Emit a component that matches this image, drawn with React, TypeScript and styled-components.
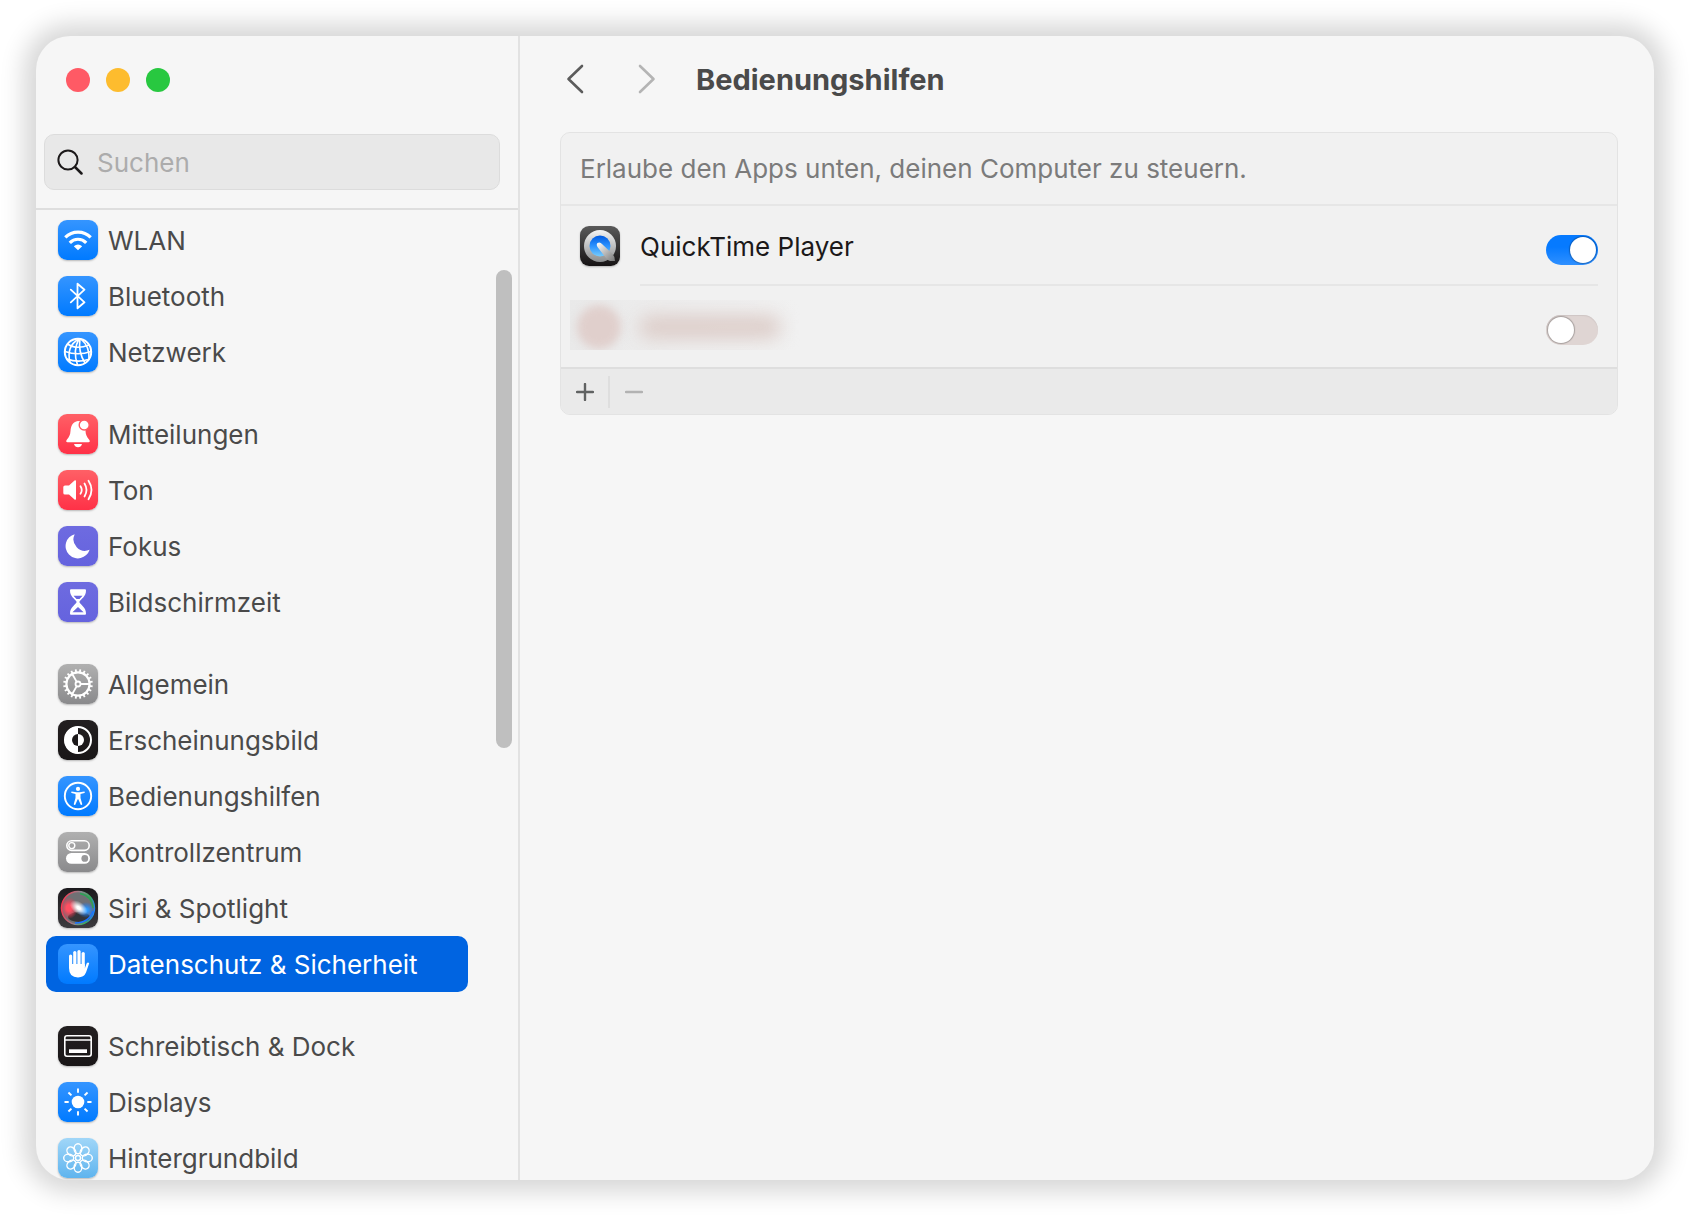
import React, { useState } from 'react';
import styled, { createGlobalStyle, css } from 'styled-components';

const GlobalStyle = createGlobalStyle`
  *, *::before, *::after { box-sizing: border-box; }
  body {
    margin: 0;
    background: #ffffff;
    font-family: Inter, "Liberation Sans", sans-serif;
    font-size: 26px;
    line-height: 32px;
    color: #4a4a4a;
  }
  button, input { font: inherit; color: inherit; }
`;

const Desktop = styled.div`
  height: 100vh;
  min-height: 480px;
  padding: 36px;
`;

const Window = styled.div`
  display: flex;
  height: 100%;
  overflow: hidden;
  border-radius: 34px;
  background: #f6f6f6;
  box-shadow: 0 0 24px 12px rgba(0, 0, 0, 0.16);
`;

const Sidebar = styled.aside`
  position: relative;
  display: flex;
  flex-direction: column;
  flex: 0 0 484px;
  min-width: 0;
  border-right: 2px solid #e2e2e2;
`;

const TrafficLights = styled.div`
  display: flex;
  gap: 16px;
  padding: 32px 30px 0;
`;

const Light = styled.button<{ $color: string }>`
  width: 24px;
  height: 24px;
  padding: 0;
  border: 0;
  border-radius: 50%;
  background: ${(p) => p.$color};
`;

const SearchField = styled.label`
  display: flex;
  align-items: center;
  gap: 14px;
  height: 56px;
  margin: 42px 18px 18px 8px;
  padding: 0 12px;
  border: 1px solid #dcdcdc;
  border-radius: 10px;
  background: #e8e8e8;
`;

const SearchInput = styled.input`
  flex: 1;
  width: 100%;
  min-width: 0;
  padding: 2px 0 0;
  border: 0;
  outline: 0;
  background: transparent;
  &::placeholder { color: #acacac; opacity: 1; }
`;

const NavList = styled.nav`
  display: flex;
  flex-direction: column;
  flex: 1;
  gap: 26px;
  min-height: 0;
  padding: 2px 50px 0 10px;
  border-top: 2px solid #dedede;
  overflow-y: auto;
  scrollbar-width: none;
`;

const NavGroup = styled.ul`
  flex: none;
  margin: 0;
  padding: 0;
  list-style: none;
`;

const NavLink = styled.a<{ $active?: boolean }>`
  display: flex;
  align-items: center;
  gap: 10px;
  height: 56px;
  padding: 0 12px;
  border-radius: 10px;
  color: inherit;
  text-decoration: none;
  white-space: nowrap;
  ${(p) => p.$active && css`
    background: #0064e1;
    color: #ffffff;
  `}
`;

const NavLabel = styled.span`
  padding-top: 2px;
`;

const ScrollThumb = styled.div`
  position: absolute;
  top: 234px;
  right: 6px;
  width: 16px;
  height: 478px;
  border-radius: 8px;
  background: #bfbfbf;
`;

const Tile = styled.svg<{ $from: string; $to: string; $flat?: boolean }>`
  flex: none;
  display: block;
  width: 40px;
  height: 40px;
  border-radius: 9px;
  background: linear-gradient(${(p) => p.$from}, ${(p) => p.$to});
  box-shadow: ${(p) => (p.$flat ? 'none' : '0 1px 2px rgba(0, 0, 0, 0.25)')};
`;

const Main = styled.main`
  flex: 1;
  min-width: 0;
  padding: 0 36px 0 40px;
`;

const Header = styled.header`
  display: flex;
  align-items: center;
  gap: 34px;
  height: 86px;
  margin-bottom: 10px;
`;

const HistoryButtons = styled.div`
  display: flex;
  gap: 42px;
`;

const NavButton = styled.button<{ $muted?: boolean }>`
  display: flex;
  justify-content: center;
  width: 30px;
  padding: 0;
  border: 0;
  background: none;
  color: ${(p) => (p.$muted ? '#b4b4b4' : '#5c5c5c')};
`;

const Title = styled.h1`
  margin: 0;
  padding-top: 2px;
  font-size: 29px;
  line-height: 32px;
  font-weight: 700;
`;

const Panel = styled.section`
  overflow: hidden;
  border: 1px solid #e3e3e3;
  border-radius: 10px;
  background: #f1f1f1;
`;

const Description = styled.p`
  margin: 0;
  padding: 20px 19px 19px;
  border-bottom: 2px solid #e6e6e6;
  color: #7b7b7b;
`;

const AppList = styled.ul`
  margin: 0;
  padding: 0;
  list-style: none;
`;

const AppRow = styled.li`
  display: flex;
  gap: 20px;
  padding-left: 19px;
`;

const AppIconCell = styled.div`
  padding-top: 20px;
`;

const AppBody = styled.div`
  display: flex;
  justify-content: space-between;
  flex: 1;
  height: 80px;
  margin-right: 19px;
  padding-top: 25px;
  border-bottom: 2px solid #e6e6e6;
  color: #1c191a;
`;

const HiddenRow = styled.li`
  display: flex;
  justify-content: space-between;
  height: 81px;
  padding: 14px 19px 0 9px;
`;

const Redaction = styled.div`
  display: flex;
  align-items: center;
  gap: 18px;
  width: 230px;
  height: 50px;
  padding: 4px 0 0 7px;
  overflow: hidden;
  background: linear-gradient(90deg, #e9e9e9, #ededed 40%, #f1f1f1);
`;

const RedactedIcon = styled.div`
  width: 44px;
  height: 44px;
  border-radius: 22px;
  background: #e0cfcc;
  filter: blur(4px);
`;

const RedactedName = styled.div`
  width: 142px;
  height: 24px;
  border-radius: 12px;
  background: #ddceca;
  filter: blur(9px);
`;

const Switch = styled.input`
  appearance: none;
  flex: none;
  width: 52px;
  height: 30px;
  margin: 4px 0 0;
  padding: 2px;
  border-radius: 15px;
  background: #dfd5d3;
  box-shadow: inset 0 1px 1px #cfc6c5;
  &::after {
    content: "";
    display: block;
    width: 26px;
    height: 26px;
    border-radius: 50%;
    background: #ffffff;
    box-shadow: 0 0 1px 1px rgba(0, 0, 0, 0.25);
  }
  &:checked {
    background: linear-gradient(#067aff 40%, #2f90ff);
    box-shadow: none;
  }
  &:checked::after { margin-left: 22px; }
`;

const HiddenSwitchCell = styled.div`
  display: flex;
  padding-top: 11px;
`;

const Toolbar = styled.footer`
  display: flex;
  align-items: center;
  height: 47px;
  border-top: 2px solid #dedede;
  background: #eaeaea;
`;

const ToolButton = styled.button<{ $muted?: boolean }>`
  display: flex;
  justify-content: center;
  width: 47px;
  padding: 0;
  border: 0;
  background: none;
  color: ${(p) => (p.$muted ? '#b2b2b2' : '#606262')};
  & + & { width: 50px; border-left: 2px solid #dedede; padding: 7px 0; }
`;

const Glyph = styled.svg`
  flex: none;
  display: block;
  fill: none;
  stroke: currentColor;
  stroke-linecap: round;
  stroke-linejoin: round;
`;

const spin = (count: number, draw: (angle: number) => React.ReactNode) =>
  Array.from({ length: count }, (_, i) => draw((360 / count) * i));

const BLUE: [string, string] = ['#3595ff', '#007aff'];
const RED: [string, string] = ['#ff6066', '#ff3147'];
const PURPLE: [string, string] = ['#6e6be0', '#6563de'];
const GREY: [string, string] = ['#b0b0b0', '#8a8a8c'];
const BLACK: [string, string] = ['#231f20', '#191617'];

type Item = { label: string; colors: [string, string]; art: React.ReactNode; active?: boolean };

const groups: Item[][] = [
  [
    {
      label: 'WLAN', colors: BLUE,
      art: (
        <g fill="none" stroke="#fff" strokeWidth="3.2">
          <path d="M7.3 17.4A18 18 0 0 1 32.7 17.4" />
          <path d="M11.8 22.8A11.3 11.3 0 0 1 28.2 22.8" />
          <path d="M20 30.2L15.8 26.2Q20 22.6 24.2 26.2Z" fill="#fff" stroke="none" />
        </g>
      ),
    },
    {
      label: 'Bluetooth', colors: BLUE,
      art: <path d="M12.8 13.6L26.5 26.3L19.5 32.3V7.7L26.5 13.7L12.8 26.4" fill="none" stroke="#fff" strokeWidth="1.8" strokeLinejoin="round" strokeLinecap="round" />,
    },
    {
      label: 'Netzwerk', colors: BLUE,
      art: (
        <g fill="none" stroke="#fff" strokeWidth="1.6">
          <circle cx="20" cy="20" r="13.2" strokeWidth="2" />
          <path d="M21 7Q8 14 12 30.500M21 7Q14.500 18 19.500 33M22 7Q20 20 27 31M23 7Q32 15 31 27" />
          <path d="M9.500 12Q18 18 31 13M7 19.500Q20 24 33 19.500M9 27Q20 31 30 27.500" />
        </g>
      ),
    },
  ],
  [
    {
      label: 'Mitteilungen', colors: RED,
      art: (
        <g fill="#fff">
          <path d="M20 7C14.500 8 12.800 12 12.500 17C12.300 21 11 23 9 25.500C7.800 27 8 28.300 9.500 28.300H30.500C32 28.300 32.200 27 31 25.500C29 23 27.700 21 27.500 17V8Z" />
          <path d="M16 30H24Q23 33.300 20 33.300T16 30Z" />
          <circle cx="26.200" cy="11" r="5" stroke="#ff5a63" strokeWidth="1.4" />
        </g>
      ),
    },
    {
      label: 'Ton', colors: RED,
      art: (
        <g fill="none" stroke="#fff" strokeWidth="1.8" strokeLinecap="round">
          <path d="M7 15.500H11L16.500 10.600Q18 9.600 18 11.300V28.700Q18 30.400 16.500 29.400L11 24.500H7Q5.300 24.500 5.300 23V17Q5.300 15.500 7 15.500Z" fill="#fff" stroke="none" />
          <path d="M22.500 16.200Q25 20 22.500 23.800M26.500 13.500Q30.500 20 26.500 26.500M30.500 10.800Q36.500 20 30.500 29.200" />
        </g>
      ),
    },
    { label: 'Fokus', colors: PURPLE, art: <path d="M16.700 8.200A12.300 12.300 0 1 0 31.600 23.800A11.500 11.500 0 0 1 16.700 8.200Z" fill="#fff" /> },
    {
      label: 'Bildschirmzeit', colors: PURPLE,
      art: (
        <g>
          <path d="M13 7.300H27Q28 7.300 28 8.500C28 15 23 16.500 21.300 20C23 23.500 28 25 28 31.500Q28 32.700 27 32.700H13Q12 32.700 12 31.500C12 25 17 23.500 18.700 20C17 16.500 12 15 12 8.500Q12 7.300 13 7.300Z" fill="#fff" />
          <path d="M15.500 13.800H24.500L21.500 17H18.500ZM20 25L25.600 30.300H14.400Z" fill="#6966df" />
        </g>
      ),
    },
  ],
  [
    {
      label: 'Allgemein', colors: GREY,
      art: (
        <g fill="none" stroke="#fff" strokeWidth="1.8">
          <circle cx="20" cy="20" r="11.600" strokeWidth="2.200" />
          <circle cx="20" cy="20" r="2.500" />
          {spin(20, (a) => <path key={a} d="M20 8.500V5.200" transform={`rotate(${a + 9} 20 20)`} />)}
          {spin(3, (a) => <path key={`s${a}`} d="M22.500 20H31" transform={`rotate(${a} 20 20)`} />)}
        </g>
      ),
    },
    {
      label: 'Erscheinungsbild', colors: BLACK,
      art: (
        <g>
          <circle cx="20" cy="20" r="13" fill="none" stroke="#fff" strokeWidth="2" />
          <path d="M20 6.500A13.500 13.500 0 0 0 20 33.500Z" fill="#fff" />
          <path d="M20 14A6 6 0 0 0 20 26Z" fill="#1c191a" />
          <path d="M20 14A6 6 0 0 1 20 26Z" fill="#fff" />
        </g>
      ),
    },
    {
      label: 'Bedienungshilfen', colors: BLUE,
      art: (
        <g fill="#fff">
          <circle cx="20" cy="20" r="13.200" fill="none" stroke="#fff" strokeWidth="1.900" />
          <circle cx="20" cy="12.900" r="2.100" />
          <path d="M13.600 15.600L18.500 16.300H21.500L26.400 15.600Q27.400 16.600 26.400 17L22.500 18V22L24.300 28.300Q23.500 29.600 22.700 28.700L20.300 23.300H19.700L17.300 28.700Q16.500 29.600 15.700 28.300L17.500 22V18L13.600 17Q12.600 16.600 13.600 15.600Z" />
        </g>
      ),
    },
    {
      label: 'Kontrollzentrum', colors: GREY,
      art: (
        <g>
          <rect x="8.800" y="8.800" width="22.400" height="9.600" rx="4.800" fill="none" stroke="#fff" strokeWidth="1.600" />
          <circle cx="13.800" cy="13.600" r="3" fill="none" stroke="#fff" strokeWidth="1.400" />
          <rect x="8" y="21" width="24" height="10.800" rx="5.400" fill="#fff" />
          <circle cx="26.800" cy="26.400" r="3.400" fill="#98989a" />
        </g>
      ),
    },
    {
      label: 'Siri & Spotlight', colors: ['#1c1a1d', '#3c3b3e'],
      art: (
        <g>
          <defs>
            <radialGradient id="siriRed"><stop offset="0.3" stopColor="#ff4f62" /><stop offset="1" stopColor="#ff2d4a" stopOpacity="0" /></radialGradient>
            <radialGradient id="siriBlue"><stop offset="0.2" stopColor="#2f9bff" /><stop offset="1" stopColor="#1573ff" stopOpacity="0" /></radialGradient>
            <radialGradient id="siriGlow"><stop offset="0.2" stopColor="#fff" /><stop offset="1" stopColor="#fff" stopOpacity="0" /></radialGradient>
            <linearGradient id="siriRim" x1="0" y1="0.400" x2="1" y2="0.600"><stop offset="0" stopColor="#ff3650" /><stop offset="0.500" stopColor="#8b8b92" /><stop offset="0.800" stopColor="#33b35c" /><stop offset="1" stopColor="#1f84ff" /></linearGradient>
          </defs>
          <circle cx="20" cy="20" r="16.500" fill="#707074" stroke="url(#siriRim)" strokeWidth="1.400" />
          <ellipse cx="21" cy="29" rx="11" ry="5" fill="#343438" />
          <ellipse cx="11" cy="20" rx="9" ry="11" fill="url(#siriRed)" />
          <ellipse cx="28" cy="22" rx="9" ry="8" fill="url(#siriBlue)" />
          <path d="M22 5.500Q34 8 35 20" fill="none" stroke="#2aa655" strokeWidth="1.300" />
          <path d="M35 23Q31 35 17 35" fill="none" stroke="#1874ff" strokeWidth="1.500" />
          <ellipse cx="20.500" cy="19.500" rx="10" ry="6" fill="url(#siriGlow)" transform="rotate(35 20 20)" />
        </g>
      ),
    },
    {
      label: 'Datenschutz & Sicherheit', colors: BLUE, active: true,
      art: (
        <g fill="#fff">
          <rect x="11" y="10.500" width="3.200" height="14" rx="1.600" />
          <rect x="15.200" y="7" width="3.200" height="16" rx="1.600" />
          <rect x="19.400" y="6" width="3.200" height="16" rx="1.600" />
          <rect x="23.600" y="8" width="3.200" height="16" rx="1.600" />
          <path d="M11 20H26.800V24.500L28.600 19.400Q30 17.500 31.200 19.200L28 28.500Q26 33.400 20 33.400Q11 33.400 11 24Z" />
        </g>
      ),
    },
  ],
  [
    {
      label: 'Schreibtisch & Dock', colors: BLACK,
      art: (
        <g fill="none" stroke="#fff" strokeWidth="1.600">
          <rect x="6.800" y="9.800" width="26.400" height="20.400" rx="2.200" />
          <path d="M7 14H33" />
          <rect x="11" y="23.300" width="18" height="3.700" fill="#fff" stroke="none" />
        </g>
      ),
    },
    {
      label: 'Displays', colors: BLUE,
      art: (
        <g fill="#fff" stroke="#fff" strokeWidth="1.900">
          <circle cx="20" cy="20" r="6.300" stroke="none" />
          {spin(8, (a) => <path key={a} d="M20 10.700V6.500" transform={`rotate(${a} 20 20)`} />)}
        </g>
      ),
    },
    {
      label: 'Hintergrundbild', colors: ['#a0d6f8', '#5fb4ee'],
      art: (
        <g fill="none" stroke="#fff" strokeWidth="1.400">
          <circle cx="20" cy="20" r="2.500" />
          {spin(8, (a) => <ellipse key={a} cx="20" cy="10.700" rx="3.900" ry="5" transform={`rotate(${a} 20 20)`} />)}
        </g>
      ),
    },
  ],
];

const QuickTimeIcon = () => (
  <Tile viewBox="0 0 40 40" $from="#5a5a5a" $to="#161314" aria-hidden="true">
    <defs>
      <linearGradient id="qtRing" x1="0" y1="0" x2="0" y2="1"><stop offset="0" stopColor="#f4f4f4" /><stop offset="1" stopColor="#8b8d8e" /></linearGradient>
      <linearGradient id="qtLens" x1="0" y1="0" x2="0" y2="1"><stop offset="0" stopColor="#0059e0" /><stop offset="0.500" stopColor="#2b92ff" /><stop offset="1" stopColor="#78ccfb" /></linearGradient>
      <linearGradient id="qtTail" x1="0" y1="0" x2="1" y2="1"><stop offset="0" stopColor="#ffffff" /><stop offset="1" stopColor="#777777" /></linearGradient>
    </defs>
    <circle cx="20" cy="20" r="16" fill="url(#qtRing)" />
    <circle cx="20" cy="20" r="10.500" fill="url(#qtLens)" />
    <path d="M17.500 17Q20 15.500 22 18L32 27.500Q35 30 35 35H30Q28 35 26 32L17.500 21Q16 18.500 17.500 17Z" fill="url(#qtTail)" />
  </Tile>
);

export default function App() {
  const [quickTime, setQuickTime] = useState(true);
  const [other, setOther] = useState(false);

  return (
    <>
      <GlobalStyle />
      <Desktop>
        <Window>
          <Sidebar>
            <TrafficLights>
              <Light $color="#ff5a65" aria-label="Schließen" />
              <Light $color="#fdbc2e" aria-label="Minimieren" />
              <Light $color="#28c840" aria-label="Vergrößern" />
            </TrafficLights>
            <SearchField>
              <Glyph width="26" height="26" viewBox="0 0 26 26" strokeWidth="2" color="#1c191a" aria-hidden="true">
                <circle cx="11" cy="11" r="9.600" />
                <path d="M18 18L24.500 24.500" strokeWidth="2.500" />
              </Glyph>
              <SearchInput type="search" placeholder="Suchen" aria-label="Suchen" />
            </SearchField>
            <NavList>
              {groups.map((group) => (
                <NavGroup key={group[0].label}>
                  {group.map((item) => (
                    <li key={item.label}>
                      <NavLink href="#" $active={item.active} aria-current={item.active ? 'page' : undefined}>
                        <Tile viewBox="0 0 40 40" $from={item.colors[0]} $to={item.colors[1]} $flat={item.active} aria-hidden="true">
                          {item.art}
                        </Tile>
                        <NavLabel>{item.label}</NavLabel>
                      </NavLink>
                    </li>
                  ))}
                </NavGroup>
              ))}
            </NavList>
            <ScrollThumb />
          </Sidebar>
          <Main>
            <Header>
              <HistoryButtons>
                <NavButton aria-label="Zurück">
                  <Glyph width="18" height="30" viewBox="0 0 18 30" strokeWidth="2.600"><path d="M16 2L2.500 15L16 28" /></Glyph>
                </NavButton>
                <NavButton $muted aria-label="Vorwärts">
                  <Glyph width="18" height="30" viewBox="0 0 18 30" strokeWidth="2.600"><path d="M2 2L15.500 15L2 28" /></Glyph>
                </NavButton>
              </HistoryButtons>
              <Title>Bedienungshilfen</Title>
            </Header>
            <Panel>
              <Description>Erlaube den Apps unten, deinen Computer zu steuern.</Description>
              <AppList>
                <AppRow>
                  <AppIconCell><QuickTimeIcon /></AppIconCell>
                  <AppBody>
                    <label htmlFor="quicktime">QuickTime Player</label>
                    <Switch id="quicktime" type="checkbox" role="switch" checked={quickTime} onChange={() => setQuickTime(!quickTime)} />
                  </AppBody>
                </AppRow>
                <HiddenRow>
                  <Redaction aria-hidden="true">
                    <RedactedIcon />
                    <RedactedName />
                  </Redaction>
                  <HiddenSwitchCell>
                    <Switch type="checkbox" role="switch" aria-label="App" checked={other} onChange={() => setOther(!other)} />
                  </HiddenSwitchCell>
                </HiddenRow>
              </AppList>
              <Toolbar>
                <ToolButton aria-label="Hinzufügen">
                  <Glyph width="18" height="18" viewBox="0 0 18 18" strokeWidth="2.400"><path d="M1 9H17M9 1V17" /></Glyph>
                </ToolButton>
                <ToolButton $muted aria-label="Entfernen">
                  <Glyph width="18" height="18" viewBox="0 0 18 18" strokeWidth="2.400"><path d="M1 9H17" /></Glyph>
                </ToolButton>
              </Toolbar>
            </Panel>
          </Main>
        </Window>
      </Desktop>
    </>
  );
}
